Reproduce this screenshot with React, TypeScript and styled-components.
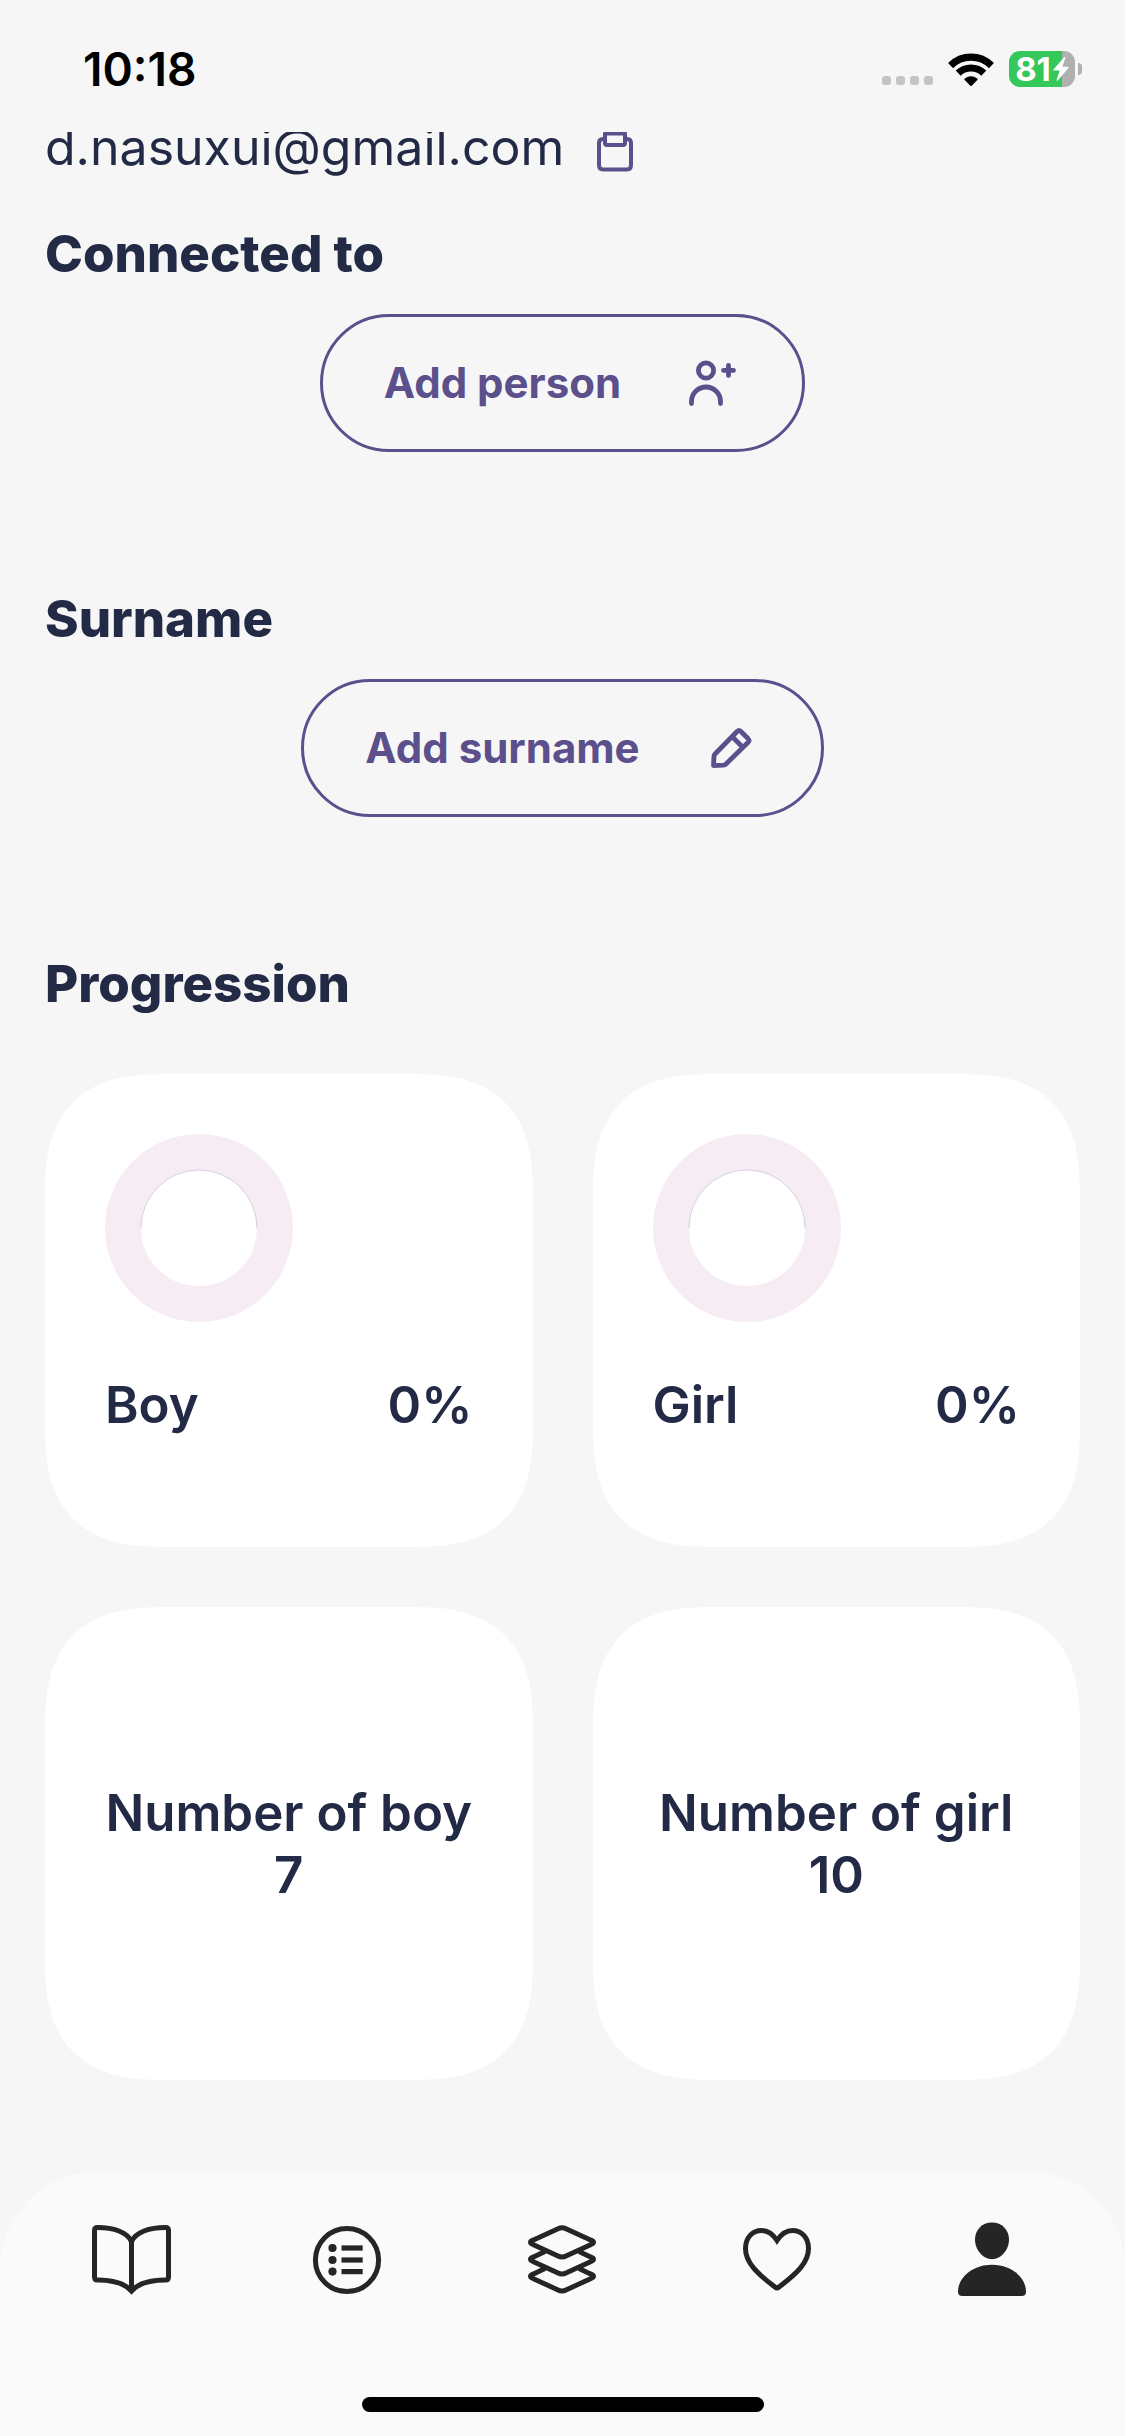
import React from "react";
import styled, { createGlobalStyle } from "styled-components";

const color = {
  page: "#f6f6f6",
  bar: "#fafafa",
  card: "#ffffff",
  ink: "#232a46",
  accent: "#5b508c",
  ring: "#f6edf4",
  icon: "#252525",
  charge: "#34c759",
  muted: "#b0b0b0",
  signal: "#c4c4c4",
};

const GlobalStyle = createGlobalStyle`
  *, *::before, *::after { box-sizing: border-box; }
  body {
    margin: 0;
    background: ${color.page};
    color: ${color.ink};
    font-family: Inter, "Liberation Sans", sans-serif;
  }
  h2, p, ul { margin: 0; padding: 0; }
  button { font: inherit; color: inherit; background: none; border: 0; padding: 0; cursor: pointer; }
  svg { display: block; flex: none; overflow: visible; }
`;

const Screen = styled.div`
  min-height: 100vh;
  display: flex;
  flex-direction: column;
`;

const StatusBar = styled.header`
  flex: none;
  height: 132px;
  padding: 6px 43px 0 83px;
  display: flex;
  align-items: center;
  justify-content: space-between;
`;

const Clock = styled.time`
  color: #000;
  font-size: 46px;
  line-height: 54px;
  font-weight: 600;
`;

const StatusIcons = styled.div`
  display: flex;
  align-items: center;
`;

const SignalDots = styled.div`
  display: flex;
  gap: 5px;
  padding-top: 23px;
  margin-right: 15px;
`;

const SignalDot = styled.span`
  width: 9px;
  height: 9px;
  border-radius: 3px;
  background: ${color.signal};
`;

const Battery = styled.div`
  display: flex;
  align-items: center;
  gap: 3px;
  margin-left: 15px;
`;

const BatteryCell = styled.div`
  width: 66px;
  height: 36px;
  border-radius: 11px;
  display: flex;
  align-items: center;
  justify-content: center;
  gap: 2px;
  color: #fff;
  font-size: 33px;
  line-height: 36px;
  font-weight: 700;
`;

const BatteryCap = styled.span`
  width: 4px;
  height: 12px;
  border-radius: 0 6px 6px 0;
  background: ${color.muted};
`;

const Content = styled.main`
  flex: 1;
  overflow: hidden;
  padding: 0 45px 92px;
`;

const EmailRow = styled.div`
  display: flex;
  align-items: center;
  gap: 24px;
  margin: -16px 0 45px;
`;

const Email = styled.p`
  font-size: 50px;
  line-height: 62px;
  font-weight: 400;
`;

const CopyButton = styled.button`
  color: ${color.accent};
`;

const Section = styled.section`
  display: flex;
  flex-direction: column;
  align-items: center;
  gap: 29px;
  margin-bottom: 136px;
`;

const Heading = styled.h2`
  width: 100%;
  font-size: 51px;
  line-height: 62px;
  font-weight: 800;
`;

const PillButton = styled.button`
  display: flex;
  align-items: center;
  gap: 48px;
  height: 138px;
  padding: 0 61px;
  border: 3px solid ${color.accent};
  border-radius: 69px;
  color: ${color.accent};
  font-size: 42px;
  line-height: 50px;
  font-weight: 700;
`;

const CardGrid = styled.div`
  display: grid;
  grid-template-columns: 1fr 1fr;
  gap: 60px;
  margin-top: 59px;
`;

const Card = styled.article`
  min-height: 473px;
  padding: 60px;
  display: flex;
  flex-direction: column;
  background: ${color.card};
  border-radius: 96px;
  font-size: 51px;
  line-height: 62px;
  font-weight: 600;

  @supports (corner-shape: superellipse(1.4)) {
    border-radius: 122px;
    corner-shape: superellipse(1.4);
  }
`;

const CountCard = styled(Card)`
  align-items: center;
  justify-content: center;
  padding: 60px 20px;
  text-align: center;
`;

const CardFooter = styled.div`
  display: flex;
  justify-content: space-between;
  margin-top: 52px;
`;

const TabBar = styled.nav`
  flex: none;
  padding: 52px 24px 24px;
  background: ${color.bar};
  border-radius: 96px 96px 0 0;
`;

const TabList = styled.ul`
  display: grid;
  grid-template-columns: repeat(5, 1fr);
  padding-right: 2px;
  list-style: none;
`;

const TabItem = styled.li`
  display: flex;
  justify-content: center;
`;

const TabButton = styled.button`
  color: ${color.icon};
`;

const HomeIndicator = styled.div`
  width: 402px;
  max-width: 60%;
  height: 15px;
  margin: 101px auto 0;
  border-radius: 8px;
  background: #000;
`;

const WifiIcon = () => (
  <svg width="46" height="33" viewBox="0 0 46 33" fill="none" stroke="#000" strokeWidth="7.2" aria-hidden="true">
    <path d="M2.6 12.6A29 29 0 0 1 43.4 12.6" />
    <path d="M10.2 20.2A18.4 18.4 0 0 1 35.8 20.2" />
    <path d="M23 32L17.4 26.4Q23 22 28.6 26.4Z" fill="#000" stroke="#000" strokeWidth="2" strokeLinejoin="round" />
  </svg>
);

const BoltIcon = () => (
  <svg width="16" height="24" viewBox="0 0 16 24" fill="#fff" aria-hidden="true">
    <path d="M11.2 0.3L0.4 12.6Q0 13.4 0.9 13.6H6.6L3.6 22.8Q3.7 24.2 4.9 23.4L15.6 10.8Q16 10 15.1 9.8H9.4L12.3 1Q12.2 -0.5 11.2 0.3Z" />
  </svg>
);

const ClipboardIcon = () => (
  <svg width="54" height="54" viewBox="0 0 54 54" fill="none" stroke="currentColor" strokeWidth="4" strokeLinejoin="round" aria-hidden="true">
    <path d="M17 19H15Q11 19 11 23V45Q11 49.500 15 49.500H39Q43 49.500 43 45V23Q43 19 39 19H37" />
    <path d="M17 13.500H37V23Q37 25 35 25H19Q17 25 17 23Z" />
  </svg>
);

const AddPersonIcon = () => (
  <svg width="72" height="72" viewBox="0 0 72 72" fill="none" stroke="currentColor" strokeWidth="4.8" strokeLinecap="round" aria-hidden="true">
    <circle cx="37" cy="23.5" r="7.6" />
    <path d="M22.5 56.500V54.500A14.500 14.500 0 0 1 51.500 54.500V56.500" />
    <path d="M59.500 18.400V28.400M54.500 23.400H64.500" />
  </svg>
);

const PencilIcon = () => (
  <svg width="72" height="72" viewBox="0 0 72 72" fill="none" stroke="currentColor" strokeWidth="4.8" strokeLinejoin="round" aria-hidden="true">
    <path d="M25.500 53.500L26 44.500Q26 43 27 42L49.300 19.300Q51 17.700 52.700 19.300L60.200 26.800Q61.800 28.500 60.200 30.200L38 52Q37 53 35.500 53.100Z" />
    <path d="M44.500 25L54 34.500" />
  </svg>
);

const BookIcon = () => (
  <svg width="81" height="72" viewBox="0 0 81 72" fill="none" stroke="currentColor" strokeWidth="5" aria-hidden="true">
    <path d="M40.500 18C37 8 22 3.500 6.500 3.500Q3.500 3.500 3.500 6.500V53Q3.500 56 6.500 56C20 56 33 58.500 40.500 67C48 58.500 61 56 74.500 56Q77.500 56 77.500 53V6.500Q77.500 3.500 74.500 3.500C59 3.500 44 8 40.500 18V67" />
  </svg>
);

const ListIcon = () => (
  <svg width="72" height="72" viewBox="0 0 72 72" fill="currentColor" aria-hidden="true">
    <circle cx="36" cy="36" r="31.6" fill="none" stroke="currentColor" strokeWidth="5" />
    {[24, 36, 47.6].map((y) => (
      <g key={y}>
        <circle cx="21.500" cy={y} r="4.1" />
        <rect x="30.500" y={y - 2.6} width="21.200" height="5.200" />
      </g>
    ))}
  </svg>
);

const LayersIcon = () => (
  <svg width="72" height="72" viewBox="0 0 72 72" fill="none" stroke="currentColor" strokeWidth="5" aria-hidden="true">
    <path d="M32 4.700Q36 2.700 40 4.700L64.500 15.900Q70.500 18.300 64.500 20.700L40 31.900Q36 33.900 32 31.900L7.500 20.700Q1.500 18.300 7.500 15.900Z" />
    {[0, 17].map((dy) => (
      <path
        key={dy}
        transform={`translate(0 ${dy})`}
        d="M19 27.500L7.500 32.900Q1.500 35.300 7.500 37.700L32 48.900Q36 50.900 40 48.900L64.500 37.700Q70.500 35.300 64.500 32.900L53 27.500"
      />
    ))}
  </svg>
);

const HeartIcon = () => (
  <svg width="72" height="72" viewBox="0 0 72 72" fill="none" stroke="currentColor" strokeWidth="5" strokeMiterlimit="6" aria-hidden="true">
    <path d="M36 16.500C31.500 9.500 26.500 6.500 20.500 6.500C11.500 6.500 4.500 13.500 4.500 24.500C4.500 38.500 16 49.500 34 63Q36 64.700 38 63C56 49.500 67.500 38.500 67.500 24.500C67.500 13.500 60.500 6.500 51.500 6.500C45.500 6.500 40.500 9.500 36 16.500Z" />
  </svg>
);

const PersonIcon = () => (
  <svg width="72" height="72" viewBox="0 0 72 72" fill="currentColor" aria-hidden="true">
    <path d="M36 -1.400C46 -1.400 53 6 53 15.600C53 26 45 35.200 36 35.200S19 26 19 15.600C19 6 26 -1.400 36 -1.400Z" />
    <path d="M6.500 72Q2 72 2 67.500C2 54 16 40.700 36 40.700S70 54 70 67.500Q70 72 65.500 72Z" />
  </svg>
);

const ProgressRing = ({ value }: { value: number }) => {
  const radius = 76;
  const length = 2 * Math.PI * radius;
  return (
    <svg width="188" height="188" viewBox="0 0 188 188" fill="none" role="img" aria-label={`${value}%`}>
      <circle cx="94" cy="94" r={radius} stroke={color.ring} strokeWidth="36" />
      <path d="M36 94A58 58 0 0 1 152 94" stroke={color.accent} strokeOpacity="0.5" strokeWidth="0.5" />
      {value > 0 && (
        <circle
          cx="94"
          cy="94"
          r={radius}
          stroke={color.accent}
          strokeWidth="36"
          strokeDasharray={`${(length * value) / 100} ${length}`}
          transform="rotate(-90 94 94)"
        />
      )}
    </svg>
  );
};

const progress = [
  { label: "Boy", value: 0 },
  { label: "Girl", value: 0 },
];

const counts = [
  { label: "Number of boy", value: 7 },
  { label: "Number of girl", value: 10 },
];

const tabs = [
  { label: "Library", Icon: BookIcon },
  { label: "Lists", Icon: ListIcon },
  { label: "Stacks", Icon: LayersIcon },
  { label: "Favourites", Icon: HeartIcon },
  { label: "Profile", Icon: PersonIcon },
];

const batteryLevel = 81;

export default function App() {
  return (
    <>
      <GlobalStyle />
      <Screen>
        <StatusBar>
          <Clock>10:18</Clock>
          <StatusIcons>
            <SignalDots>
              {[0, 1, 2, 3].map((n) => (
                <SignalDot key={n} />
              ))}
            </SignalDots>
            <WifiIcon />
            <Battery>
              <BatteryCell
                style={{
                  background: `linear-gradient(90deg, ${color.charge} ${batteryLevel}%, ${color.muted} ${batteryLevel}%)`,
                }}
              >
                {batteryLevel}
                <BoltIcon />
              </BatteryCell>
              <BatteryCap />
            </Battery>
          </StatusIcons>
        </StatusBar>

        <Content>
          <EmailRow>
            <Email>d.nasuxui@gmail.com</Email>
            <CopyButton type="button" aria-label="Copy email">
              <ClipboardIcon />
            </CopyButton>
          </EmailRow>

          <Section>
            <Heading>Connected to</Heading>
            <PillButton type="button">
              Add person
              <AddPersonIcon />
            </PillButton>
          </Section>

          <Section>
            <Heading>Surname</Heading>
            <PillButton type="button">
              Add surname
              <PencilIcon />
            </PillButton>
          </Section>

          <Heading>Progression</Heading>
          <CardGrid>
            {progress.map(({ label, value }) => (
              <Card key={label}>
                <ProgressRing value={value} />
                <CardFooter>
                  <span>{label}</span>
                  <span>{value}%</span>
                </CardFooter>
              </Card>
            ))}
            {counts.map(({ label, value }) => (
              <CountCard key={label}>
                <p>{label}</p>
                <p>{value}</p>
              </CountCard>
            ))}
          </CardGrid>
        </Content>

        <TabBar aria-label="Main">
          <TabList>
            {tabs.map(({ label, Icon }) => (
              <TabItem key={label}>
                <TabButton type="button" aria-label={label}>
                  <Icon />
                </TabButton>
              </TabItem>
            ))}
          </TabList>
          <HomeIndicator />
        </TabBar>
      </Screen>
    </>
  );
}
